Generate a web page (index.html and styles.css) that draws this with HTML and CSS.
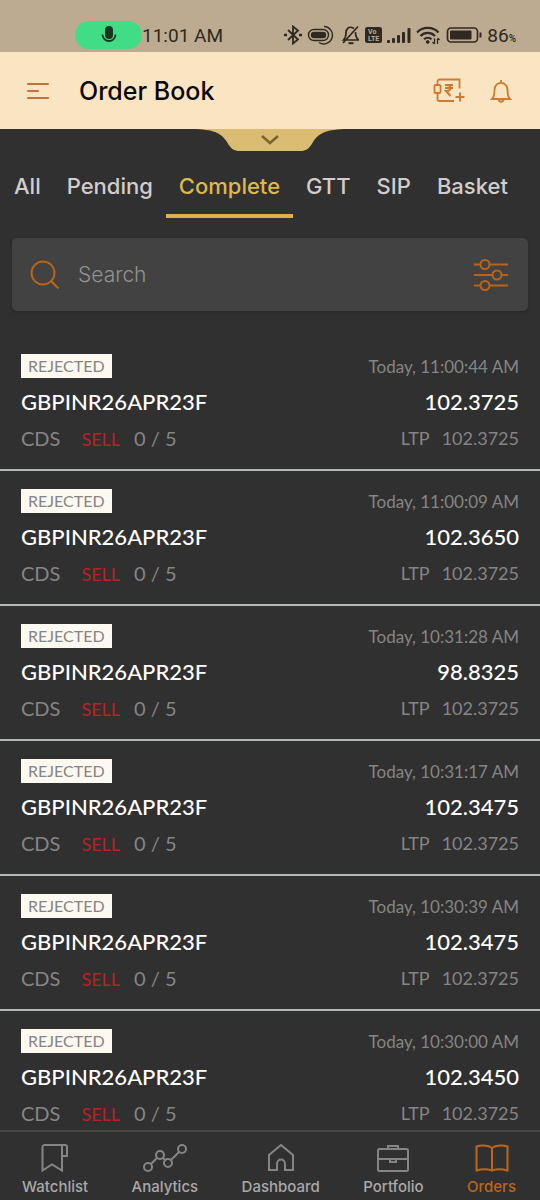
FILE: index.html
```html
<!DOCTYPE html>
<html lang="en">
	<head>
		<meta charset="UTF-8">
		<meta name="viewport" content="width=device-width, initial-scale=1.0">
		<title>Order Book</title>
		<link rel="stylesheet" href="styles.css">
	</head>
	<body>
		<div class="app">
			<div class="status-bar">
				<div class="status-left">
					<span class="mic-pill">
						<svg width="16" height="18" viewBox="0 0 16 18"><rect x="4" y="0" width="8" height="13" rx="4" fill="#17351f"/><path d="M1.5 8.5a6.500 6.500 0 0 0 13 0" fill="none" stroke="#17351f" stroke-width="1.800"/></svg>
					</span>
					<span>11:01 AM</span>
				</div>
				<div class="status-right">
					<!-- bluetooth -->
					<svg width="18" height="20" viewBox="0 0 18 20" fill="none" stroke="#30291f" stroke-width="1.800"><path d="M4 5l10 9.500-5 4V1.500l5 4L4 15"/><path d="M0 10h3M15 10h3" stroke-width="2.400"/></svg>
					<!-- phone link -->
					<svg width="28" height="20" viewBox="0 0 28 20" fill="none" stroke="#30291f" stroke-width="1.400"><rect x="1.500" y="4.500" width="20" height="11" rx="5.500"/><rect x="4.500" y="7.500" width="14" height="5" rx="2.500" fill="#30291f"/><path d="M17 1.500a8.700 8.700 0 1 1-5 16"/></svg>
					<!-- silent -->
					<svg width="20" height="20" viewBox="0 0 20 20" fill="none" stroke="#30291f" stroke-width="1.700"><path d="M14 3.500C9 .5 6 3.500 6 8c0 4-1 5.500-2.500 7H19M15.500 7c0 4 .5 6 3 8M3 18L18 1.500"/><path d="M8.500 18.200h5" stroke-width="2"/></svg>
					<!-- volte -->
					<svg width="17" height="16" viewBox="0 0 17 16"><rect width="17" height="16" rx="2.500" fill="#30291f"/><g class="volte"><text x="3" y="7">Vo</text><text x="3" y="14">LTE</text></g></svg>
					<!-- signal -->
					<svg width="24" height="16" viewBox="0 0 24 16" fill="#30291f"><rect x="0" y="13" width="3" height="3" rx="1"/><rect x="5" y="11" width="3" height="5" rx="1"/><rect x="10" y="8" width="3" height="8" rx="1"/><rect x="15" y="5" width="3" height="11" rx="1"/><rect x="20.500" y="1" width="3" height="15" rx="1"/></svg>
					<!-- wifi -->
					<svg width="25" height="20" viewBox="0 0 25 20" fill="none" stroke="#30291f" stroke-width="2.200"><path d="M1 7.500a15 15 0 0 1 21.500 0M4.500 11a10 10 0 0 1 14.500 0M8 14.300a5.500 5.500 0 0 1 7.500 0"/><circle cx="11.700" cy="17" r="1.400" fill="#30291f" stroke-width="1"/><path d="M18.500 13.500v5M21.500 19v-5M16.500 17l2 2M23.500 15l-2-2" stroke-width="1.300"/></svg>
					<!-- battery -->
					<svg width="36" height="16" viewBox="0 0 36 16" fill="none" stroke="#30291f" stroke-width="1.700"><rect x="1.500" y="1" width="30" height="14" rx="3.500"/><rect x="4" y="3.500" width="21.500" height="9" rx="1" fill="#30291f" stroke="none"/><path d="M34.500 5.500v5" stroke-width="2"/></svg>
					<span>86<small>%</small></span>
				</div>
			</div>

			<header class="header">
				<button class="icon-button" aria-label="Menu">
					<svg width="24" height="18" viewBox="0 0 24 18" stroke="#c2743a" stroke-width="2.200" stroke-linecap="round"><path d="M2 2h20M2 9h10M2 16h20"/></svg>
				</button>
				<h1 class="title">Order Book</h1>
				<button class="icon-button" aria-label="Add funds">
					<svg width="32" height="26" viewBox="0 0 32 26" fill="none" stroke="#cf7a33" stroke-width="1.800"><path d="M4.500 7V3.500a2 2 0 0 1 2-2h20v9M4.500 15v6a2 2 0 0 0 2 2H21"/><rect x="1.500" y="7" width="6" height="8" rx="1"/><path d="M12 7h8M12 10h8M14 7c4.500 0 5 6 0 6h-1l4.500 5M27 14.500v9M22.500 19h9" stroke-width="2"/></svg>
				</button>
				<button class="icon-button" aria-label="Notifications">
					<svg width="22" height="24" viewBox="0 0 22 24" fill="none" stroke="#cf7a33" stroke-width="1.800"><path d="M2 20c2-2 2.500-4 2.500-9 0-9.500 13-9.500 13 0 0 5 .5 7 2.500 9z"/><path d="M11 3.500V1M8.500 20.500c.5 3 4.500 3 5 0"/></svg>
				</button>
			</header>

			<button class="notch" aria-label="Show summary">
				<svg width="148" height="22" viewBox="0 0 148 22"><path d="M0 0C20 1 26 5 31 13c4 7 7 9 13 9h60c6 0 9-2 13-9 5-8 11-12 31-13z" fill="#dabd73"/><path d="M66 7l8 7 8-7" fill="none" stroke="#7b6433" stroke-width="2.600"/></svg>
			</button>

			<nav class="tabs">
				<a class="tab" href="#all">All</a>
				<a class="tab" href="#pending">Pending</a>
				<a class="tab active" href="#complete">Complete</a>
				<a class="tab" href="#gtt">GTT</a>
				<a class="tab" href="#sip">SIP</a>
				<a class="tab" href="#basket">Basket</a>
			</nav>

			<form class="search">
				<svg width="30" height="30" viewBox="0 0 30 30" fill="none" stroke="#b8651b" stroke-width="2"><circle cx="13" cy="13" r="11.500"/><path d="M21 21l7.500 7.500"/></svg>
				<input class="search-input" type="search" placeholder="Search" aria-label="Search">
				<button class="icon-button" type="button" aria-label="Filter">
					<svg width="34" height="32" viewBox="0 0 34 32" fill="none" stroke="#b8651b" stroke-width="2"><path d="M0 5.500h7M16 5.500h18M0 16h18M28 16h6M0 26.500h7M16 26.500h18"/><circle cx="11" cy="5.500" r="4.500"/><circle cx="23" cy="16" r="4.500"/><circle cx="11" cy="26.500" r="4.500"/></svg>
				</button>
			</form>

			<main class="orders">
				<article class="order">
					<span class="badge">REJECTED</span>
					<time class="time">Today, 11:00:44 AM</time>
					<h2 class="symbol">GBPINR26APR23F</h2>
					<strong class="price">102.3725</strong>
					<div class="detail"><span>CDS</span><span class="sell">SELL</span><span>0 / 5</span></div>
					<div class="ltp"><span>LTP</span><span>102.3725</span></div>
				</article>
				<article class="order">
					<span class="badge">REJECTED</span>
					<time class="time">Today, 11:00:09 AM</time>
					<h2 class="symbol">GBPINR26APR23F</h2>
					<strong class="price">102.3650</strong>
					<div class="detail"><span>CDS</span><span class="sell">SELL</span><span>0 / 5</span></div>
					<div class="ltp"><span>LTP</span><span>102.3725</span></div>
				</article>
				<article class="order">
					<span class="badge">REJECTED</span>
					<time class="time">Today, 10:31:28 AM</time>
					<h2 class="symbol">GBPINR26APR23F</h2>
					<strong class="price">98.8325</strong>
					<div class="detail"><span>CDS</span><span class="sell">SELL</span><span>0 / 5</span></div>
					<div class="ltp"><span>LTP</span><span>102.3725</span></div>
				</article>
				<article class="order">
					<span class="badge">REJECTED</span>
					<time class="time">Today, 10:31:17 AM</time>
					<h2 class="symbol">GBPINR26APR23F</h2>
					<strong class="price">102.3475</strong>
					<div class="detail"><span>CDS</span><span class="sell">SELL</span><span>0 / 5</span></div>
					<div class="ltp"><span>LTP</span><span>102.3725</span></div>
				</article>
				<article class="order">
					<span class="badge">REJECTED</span>
					<time class="time">Today, 10:30:39 AM</time>
					<h2 class="symbol">GBPINR26APR23F</h2>
					<strong class="price">102.3475</strong>
					<div class="detail"><span>CDS</span><span class="sell">SELL</span><span>0 / 5</span></div>
					<div class="ltp"><span>LTP</span><span>102.3725</span></div>
				</article>
				<article class="order">
					<span class="badge">REJECTED</span>
					<time class="time">Today, 10:30:00 AM</time>
					<h2 class="symbol">GBPINR26APR23F</h2>
					<strong class="price">102.3450</strong>
					<div class="detail"><span>CDS</span><span class="sell">SELL</span><span>0 / 5</span></div>
					<div class="ltp"><span>LTP</span><span>102.3725</span></div>
				</article>
			</main>

			<nav class="bottom-nav">
				<a class="nav-item" href="#watchlist">
					<svg width="28" height="28" viewBox="0 0 28 28"><path d="M3.500 1H24a2 2 0 0 1 2 2v9h-5V1M3.500 1a2 2 0 0 0-2 2v23.500L11 20.500l10 6V12"/></svg>
					<span>Watchlist</span>
				</a>
				<a class="nav-item" href="#analytics">
					<svg width="44" height="28" viewBox="0 0 44 28"><circle cx="5" cy="23" r="4"/><circle cx="17" cy="11" r="4"/><circle cx="25" cy="19" r="4"/><circle cx="39" cy="5" r="4"/><path d="M8 20l6-6M20 14l2 2M28 16l8-8"/></svg>
					<span>Analytics</span>
				</a>
				<a class="nav-item" href="#dashboard">
					<svg width="28" height="28" viewBox="0 0 28 28"><path d="M2 11L14 1l12 10v15h-8v-6c0-6-8-6-8 0v6H2z"/></svg>
					<span>Dashboard</span>
				</a>
				<a class="nav-item" href="#portfolio">
					<svg width="32" height="28" viewBox="0 0 32 28"><rect x="1" y="5" width="30" height="22" rx="1.500"/><path d="M11 5V2h10v3M1 15h30M13 15v3h6v-3"/></svg>
					<span>Portfolio</span>
				</a>
				<a class="nav-item current" href="#orders">
					<svg width="34" height="28" viewBox="0 0 34 28"><path d="M17 4C13 1 6 1 1.500 2.500v24c5-1.500 11-1.500 15.500 0 4.500-1.500 10.500-1.500 15.500 0v-24C28 1 21 1 17 4zM17 4v22"/></svg>
					<span>Orders</span>
				</a>
			</nav>
		</div>
	</body>
</html>
```
FILE: styles.css
```css
* {
	box-sizing: border-box;
}

body {
	margin: 0;
	background-color: #303030;
	font-family: Inter, "Open Sans", sans-serif;
	color: white;
}

svg {
	display: block;
	flex: none;
}

a {
	color: inherit;
	text-decoration: none;
}

.app {
	display: flex;
	flex-direction: column;
	height: 100vh;
}

.status-bar {
	display: flex;
	flex: none;
	justify-content: space-between;
	align-items: center;
	height: 52px;
	padding: 18px 24px 0 75px;
	background-color: #bcab90;
	color: #30291f;
	font-family: Roboto, sans-serif;
	font-size: 19px;
}

.status-left {
	display: flex;
	align-items: center;
}

.status-right {
	display: flex;
	align-items: center;
	gap: 5px;
}

.status-right small {
	font-size: 10px;
	font-weight: 500;
}

.mic-pill {
	display: flex;
	align-items: center;
	justify-content: center;
	width: 67px;
	height: 28px;
	border-radius: 14px;
	background-color: #40dd86;
}

.volte {
	fill: #bcab90;
	font-size: 7px;
	font-weight: bold;
}

.header {
	display: flex;
	flex: none;
	align-items: center;
	gap: 25px;
	height: 77px;
	padding: 0 28px 0 26px;
	background-color: #fae5c3;
}

.title {
	flex: 1;
	margin: 0 0 0 4px;
	color: #0c0808;
	font-size: 25px;
	font-weight: 500;
}

.icon-button {
	padding: 0;
	border: 0;
	background: none;
}

.notch {
	align-self: center;
	padding: 0;
	border: 0;
	background: none;
}

.tabs {
	display: flex;
	padding: 0 1px;
}

.tab {
	padding: 20px 13px 12px;
	border-bottom: 4px solid transparent;
	color: #d2cccc;
	font-size: 22px;
	font-weight: 500;
	line-height: 31px;
}

.tab.active {
	border-color: #ddb04f;
	color: #ddb84d;
}

.search {
	display: flex;
	flex: none;
	align-items: center;
	gap: 18px;
	height: 73px;
	margin: 20px 12px 25px;
	padding: 0 20px 0 18px;
	border-radius: 5px;
	background-color: #424242;
	box-shadow: 0 1px 3px #262626;
}

.search-input {
	flex: 1;
	min-width: 0;
	padding: 0;
	border: 0;
	outline: 0;
	background: none;
	color: white;
	font: 300 21px Inter, sans-serif;
}

.search-input::placeholder {
	color: #929292;
}

.orders {
	flex: 1;
	min-height: 0;
	overflow-y: auto;
	scrollbar-width: none;
	font-family: Lato, sans-serif;
}

.order {
	display: grid;
	grid-template-columns: 1fr auto;
	grid-template-rows: 24px 32px 28px;
	row-gap: 7px;
	align-items: center;
	padding: 18px 21px 17px;
	border-bottom: 2px solid #b4b8b4;
	color: #858585;
}

.badge {
	justify-self: start;
	padding: 0 7px;
	background-color: #fef9f0;
	color: #858585;
	font-size: 16px;
	line-height: 24px;
}

.time {
	font-size: 17px;
	text-align: right;
}

.symbol, .price {
	margin: 0;
	color: white;
	font-size: 22px;
	font-weight: 500;
}

.price {
	text-align: right;
}

.detail, .ltp {
	display: flex;
	align-items: baseline;
}

.detail {
	gap: 14px;
	font-size: 20px;
}

.sell {
	margin-left: 7px;
	color: #bd2024;
	font-size: 18px;
}

.ltp {
	justify-content: flex-end;
	gap: 12px;
	font-size: 18px;
}

.bottom-nav {
	display: flex;
	flex: none;
	justify-content: space-between;
	height: 70px;
	padding: 12px 24px 0 22px;
	border-top: 2px solid #47463a;
	background-color: #303030;
	color: #a9a9a9;
	font-size: 15px;
	font-weight: 500;
	line-height: 20px;
}

.nav-item {
	display: flex;
	flex-direction: column;
	align-items: center;
	gap: 5px;
}

.nav-item svg {
	fill: none;
	stroke: #858585;
	stroke-width: 2;
}

.nav-item.current {
	color: #bd6618;
}

.nav-item.current svg {
	stroke: #bd6618;
}
```
